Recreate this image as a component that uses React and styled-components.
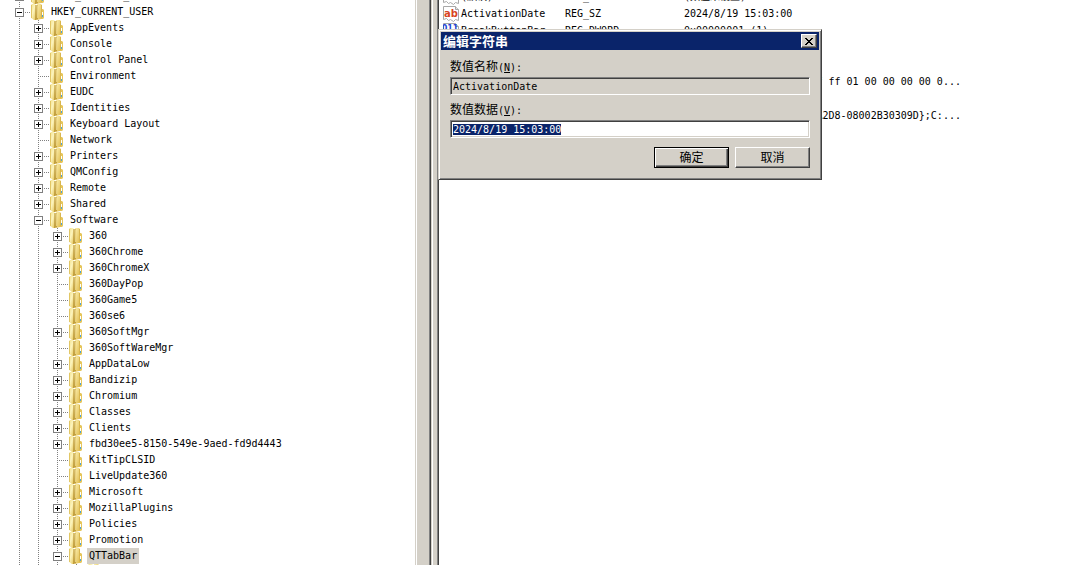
import React, { useEffect, useRef } from "react";
import styled, { createGlobalStyle, css } from "styled-components";

const face = "#d4d0c8";
const navy = "#0a246a";
const shadow = "#808080";
const dark = "#404040";

const GlobalStyle = createGlobalStyle`
  * { box-sizing: border-box; }
  body {
    margin: 0;
    background: #fff;
    color: #000;
    font: 10px/16px "DejaVu Sans Mono", "Noto Sans CJK SC", monospace;
  }
  button, input { font: inherit; color: inherit; border-radius: 0; }
`;

const Window = styled.main`
  display: flex;
  height: 100vh;
  overflow: hidden;
  position: relative;
`;

const TreePane = styled.nav`
  flex: 0 0 415px;
  height: 100%;
  overflow: hidden;
  background: #fff;
`;

const TreeList = styled.ul`
  margin: -12px 0 0;
  padding: 0 0 0 10px;
  list-style: none;
`;

const TreeRow = styled.li`
  display: flex;
  height: 16px;
  white-space: pre;
`;

const dots = css`
  background-image: repeating-linear-gradient(to bottom, ${shadow} 0 1px, transparent 1px 2px);
  background-repeat: no-repeat;
  background-size: 1px 16px;
  background-position: 9px 0;
`;

const Guide = styled.span`
  display: flex;
  align-items: center;
  flex: 0 0 19px;
  ${dots}
`;

const Branch = styled(Guide)`
  padding-left: 5px;
  &::after {
    content: "";
    flex: 1;
    height: 1px;
    margin-right: -2px;
    background: repeating-linear-gradient(to right, transparent 0 1px, ${shadow} 1px 2px);
  }
`;

const LeafGap = styled.span`
  flex: 0 0 5px;
`;

const Expander = styled.button`
  display: flex;
  align-items: center;
  justify-content: center;
  width: 9px;
  height: 9px;
  padding: 0;
  border: 1px solid ${shadow};
  background: #fff;
`;

const IconCell = styled.span`
  flex: 0 0 20px;
  height: 16px;
  svg { display: block; }
`;

const KeyName = styled.span`
  padding: 0 2px;
  background: ${(p) => (p.$selected ? face : "transparent")};
`;

const ScrollTrack = styled.div`
  flex: 0 0 16px;
  background: ${face};
  border-left: 1px solid ${face};
  border-right: 1px solid ${dark};
  box-shadow: inset 1px 0 #fff, inset -1px 0 ${shadow};
`;

const Splitter = styled(ScrollTrack)`
  flex-basis: 8px;
`;

const ValuePane = styled.section`
  flex: 1;
  min-width: 0;
  overflow: hidden;
  background: #fff;
`;

const ValueTable = styled.table`
  margin-top: -12px;
  width: 100%;
  table-layout: fixed;
  border-collapse: collapse;
`;

const Cell = styled.td`
  height: 17px;
  padding: 0;
  line-height: 16px;
  white-space: pre;
  vertical-align: middle;
`;

const NameCell = styled.div`
  display: flex;
  gap: 2px;
  padding-left: 4px;
`;

const Dialog = styled.form`
  position: absolute;
  left: 438px;
  top: 29px;
  width: 384px;
  padding: 1px;
  background: ${face};
  border: 1px solid;
  border-color: ${face} ${dark} ${dark} ${face};
  box-shadow: inset 1px 1px #fff, inset -1px -1px ${shadow};
`;

const TitleBar = styled.header`
  display: flex;
  align-items: center;
  justify-content: space-between;
  height: 18px;
  margin: 1px 1px 0;
  padding: 0 2px;
  background: ${navy};
  color: #fff;
`;

const Title = styled.h1`
  margin: 0;
  font: bold 13px/16px "Noto Sans CJK SC", sans-serif;
`;

const CloseButton = styled.button`
  display: flex;
  align-items: center;
  justify-content: center;
  width: 16px;
  height: 14px;
  padding: 0;
  color: #000;
  background: ${face};
  border: 1px solid;
  border-color: #fff ${dark} ${dark} #fff;
  box-shadow: inset -1px -1px ${shadow};
`;

const Fields = styled.div`
  display: flex;
  flex-direction: column;
  padding: 6px 10px 10px;
`;

const FieldLabel = styled.label`
  height: 16px;
  margin: 3px 0 2px;
  font-size: 12px;
  line-height: 16px;
`;

const Mnemonic = styled.span`
  font-size: 10px;
`;

const TextField = styled.input`
  width: 100%;
  height: 18px;
  margin-bottom: 4px;
  padding: 0 2px;
  outline: none;
  background: ${(p) => (p.readOnly ? face : "#fff")};
  border: 1px solid;
  border-color: ${shadow} #fff #fff ${shadow};
  box-shadow: inset 1px 1px ${dark}, inset -1px -1px ${face};
  &::selection { background: ${navy}; color: #fff; }
`;

const Actions = styled.div`
  display: flex;
  justify-content: flex-end;
  gap: 6px;
  margin-top: 5px;
`;

const PushButton = styled.button`
  width: 75px;
  height: 21px;
  padding: 0;
  font-size: 12px;
  line-height: 16px;
  background: ${face};
  border: 1px solid;
  border-color: ${(p) => (p.$primary ? "#000" : `#fff ${dark} ${dark} #fff`)};
  box-shadow: ${(p) =>
    p.$primary
      ? `inset 1px 1px #fff, inset -1px -1px ${dark}, inset -2px -2px ${shadow}`
      : `inset -1px -1px ${shadow}`};
`;

const keys = [
  [0, "+", "HKEY_CLASSES_ROOT"],
  [0, "-", "HKEY_CURRENT_USER"],
  [1, "+", "AppEvents"],
  [1, "+", "Console"],
  [1, "+", "Control Panel"],
  [1, "", "Environment"],
  [1, "+", "EUDC"],
  [1, "+", "Identities"],
  [1, "+", "Keyboard Layout"],
  [1, "", "Network"],
  [1, "+", "Printers"],
  [1, "+", "QMConfig"],
  [1, "+", "Remote"],
  [1, "+", "Shared"],
  [1, "-", "Software"],
  [2, "+", "360"],
  [2, "+", "360Chrome"],
  [2, "+", "360ChromeX"],
  [2, "", "360DayPop"],
  [2, "", "360Game5"],
  [2, "", "360se6"],
  [2, "+", "360SoftMgr"],
  [2, "", "360SoftWareMgr"],
  [2, "+", "AppDataLow"],
  [2, "+", "Bandizip"],
  [2, "+", "Chromium"],
  [2, "+", "Classes"],
  [2, "+", "Clients"],
  [2, "+", "fbd30ee5-8150-549e-9aed-fd9d4443"],
  [2, "", "KitTipCLSID"],
  [2, "", "LiveUpdate360"],
  [2, "+", "Microsoft"],
  [2, "+", "MozillaPlugins"],
  [2, "+", "Policies"],
  [2, "+", "Promotion"],
  [2, "-", "QTTabBar"],
  [3, "", ""],
];

const values = [
  ["ab", "(默认)", "REG_SZ", "(数值未设置)"],
  ["ab", "ActivationDate", "REG_SZ", "2024/8/19 15:03:00"],
  ["011", "BreakButtonBar", "REG_DWORD", "0x00000001 (1)"],
  null,
  null,
  ["", "", "", "ff ff ff ff ff ff ff ff ff 01 00 00 00 00 0..."],
  null,
  ["", "", "", "::{20D04FE0-3AEA-1069-A2D8-08002B30309D};C:..."],
];

const Folder = () => (
  <svg width="16" height="16" viewBox="0 0 16 16" aria-hidden="true">
    <defs>
      <linearGradient id="flap" x1="0" x2="1" y1="0" y2="1">
        <stop offset="0" stopColor="#f3e08a" />
        <stop offset="0.45" stopColor="#fcf4bd" />
        <stop offset="1" stopColor="#e3c254" />
      </linearGradient>
      <linearGradient id="front" x1="0" x2="1" y1="0" y2="1">
        <stop offset="0" stopColor="#fbefaf" />
        <stop offset="1" stopColor="#dfb947" />
      </linearGradient>
      <linearGradient id="spine" x1="0" x2="0" y1="0" y2="1">
        <stop offset="0" stopColor="#d9c070" />
        <stop offset="1" stopColor="#c09c38" />
      </linearGradient>
    </defs>
    <path d="M12 5h2l1 1v8l-1 1h-2z" fill="#e6c65c" />
    <path d="M8 0h4l1 1v13l-1 1-4 1z" fill="url(#front)" />
    <path d="M2 1l1-1h3l1 1v15H5l-3-2z" fill="url(#flap)" />
    <path d="M6 1h3v14l-2 1H6z" fill="url(#spine)" />
    <path d="M8 2h1v12H8z" fill="#e7d080" />
    <path d="M2 1h1v13H2z" fill="#e2c766" />
    <path d="M12 1h1v13h-1z" fill="#d9b64e" />
    <path d="M13 8h1v4h-1z" fill="#fff" />
    <path d="M13 11h1v2h-1z" fill="#4aa3dc" />
  </svg>
);

const ValueIcon = ({ text }) => (
  <svg width="16" height="16" viewBox="0 0 16 16" aria-hidden="true">
    <path d="M.5.5h12l3 3v11l-3-1-2 2-3-2-2 1-2-2-3 1z" fill="#fff" stroke="#a8a8a8" />
    <path d="M12.500.5v3h3" fill="#e4e4e4" stroke="#a8a8a8" />
    {text === "ab" ? (
      <text x="8" y="11" textAnchor="middle" fontFamily="DejaVu Sans" fontWeight="bold" fontSize="10" fill="#d8441f">
        ab
      </text>
    ) : (
      <text x="7" y="8" textAnchor="middle" fontFamily="DejaVu Sans" fontWeight="bold" fontSize="8" fill="#2244d4">
        {text}
      </text>
    )}
  </svg>
);

const TreeItem = ({ level, state, name }) => (
  <TreeRow>
    {Array.from({ length: level }, (_, i) => (
      <Guide key={i} />
    ))}
    <Branch>
      {state ? (
        <Expander type="button" aria-label={name}>
          <svg width="7" height="7" viewBox="0 0 7 7" shapeRendering="crispEdges">
            <path d={state === "+" ? "M1 3h5v1H1zM3 1h1v5H3z" : "M1 3h5v1H1z"} />
          </svg>
        </Expander>
      ) : (
        <LeafGap />
      )}
    </Branch>
    <IconCell>
      <Folder />
    </IconCell>
    <KeyName $selected={name === "QTTabBar"}>{name}</KeyName>
  </TreeRow>
);

export default function App() {
  const field = useRef(null);
  useEffect(() => {
    field.current.focus();
    field.current.select();
  }, []);

  return (
    <>
      <GlobalStyle />
      <Window>
        <TreePane>
          <TreeList>
            {keys.map(([level, state, name], i) => (
              <TreeItem key={i} level={level} state={state} name={name} />
            ))}
          </TreeList>
        </TreePane>
        <ScrollTrack />
        <Splitter />
        <ValuePane>
          <ValueTable>
            <colgroup>
              <col style={{ width: 126 }} />
              <col style={{ width: 119 }} />
              <col />
            </colgroup>
            <tbody>
              {values.map((v, i) => (
                <tr key={i}>
                  <Cell>
                    {v && v[0] && (
                      <NameCell>
                        <ValueIcon text={v[0]} />
                        {v[1]}
                      </NameCell>
                    )}
                  </Cell>
                  <Cell>{v && v[2]}</Cell>
                  <Cell>{v && v[3]}</Cell>
                </tr>
              ))}
            </tbody>
          </ValueTable>
        </ValuePane>
        <Dialog role="dialog" aria-labelledby="dialog-title" onSubmit={(e) => e.preventDefault()}>
          <TitleBar>
            <Title id="dialog-title">编辑字符串</Title>
            <CloseButton type="button" aria-label="关闭">
              <svg width="8" height="7" viewBox="0 0 8 7" shapeRendering="crispEdges">
                <path d="M0 0h2v1h1v1h2V1h1V0h2v1H7v1H6v1H5v1h1v1h1v1h1v1H6V6H5V5H3v1H2v1H0V6h1V5h1V4h1V3H2V2H1V1H0z" />
              </svg>
            </CloseButton>
          </TitleBar>
          <Fields>
            <FieldLabel htmlFor="value-name">
              数值名称<Mnemonic>(<u>N</u>):</Mnemonic>
            </FieldLabel>
            <TextField id="value-name" readOnly value="ActivationDate" />
            <FieldLabel htmlFor="value-data">
              数值数据<Mnemonic>(<u>V</u>):</Mnemonic>
            </FieldLabel>
            <TextField id="value-data" ref={field} defaultValue="2024/8/19 15:03:00" />
            <Actions>
              <PushButton type="submit" $primary>
                确定
              </PushButton>
              <PushButton type="button">取消</PushButton>
            </Actions>
          </Fields>
        </Dialog>
      </Window>
    </>
  );
}
